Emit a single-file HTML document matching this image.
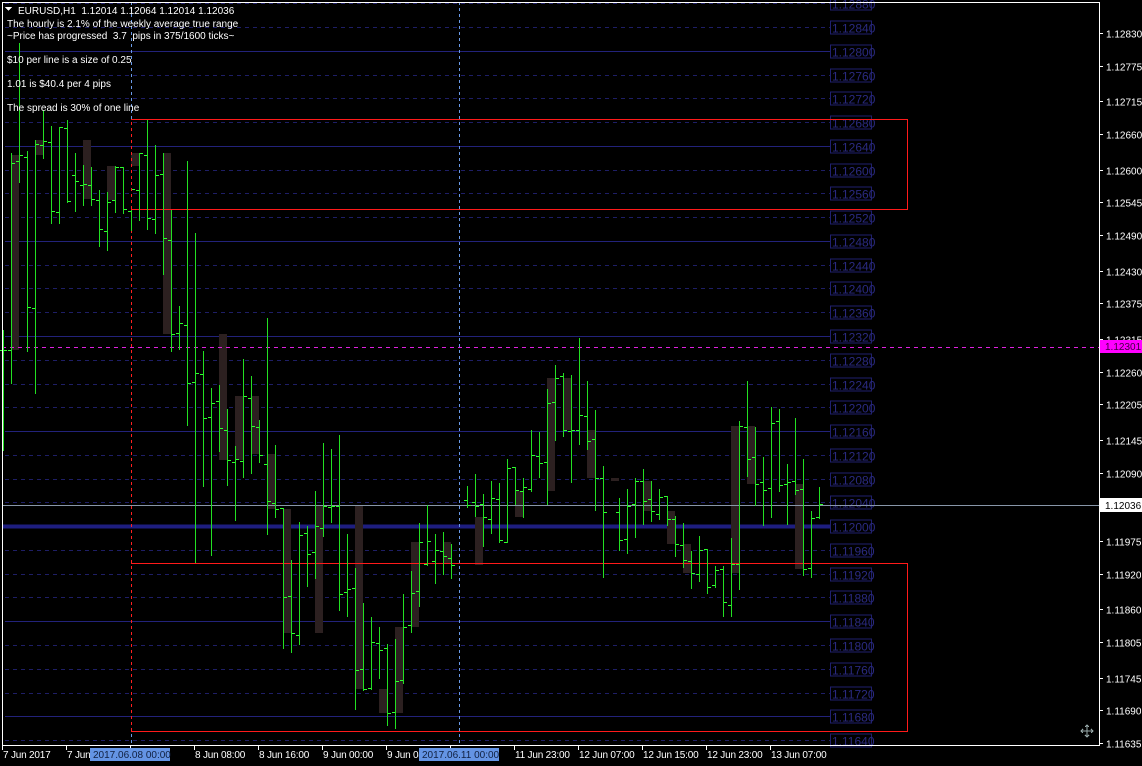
<!DOCTYPE html>
<html><head><meta charset="utf-8"><style>
html,body{margin:0;padding:0;background:#000;width:1142px;height:766px;overflow:hidden}
svg{display:block;font-family:"Liberation Sans",sans-serif}
text{white-space:pre}
</style></head><body>
<svg id="s" width="1142" height="766" xmlns="http://www.w3.org/2000/svg" shape-rendering="crispEdges">
<rect width="1142" height="766" fill="#000"/>
<g id="grid"></g>
<g id="rects" fill="#2c2020"></g>
<line x1="131.5" y1="2" x2="131.5" y2="745" stroke="#6a9ae8" stroke-dasharray="3,3"/>
<line x1="131.5" y1="119" x2="131.5" y2="731" stroke="#ff2020" stroke-dasharray="3,3" stroke-dashoffset="3"/>
<line x1="459.5" y1="2" x2="459.5" y2="745" stroke="#6a9ae8" stroke-dasharray="3,3"/>
<g stroke="#ff1a1a" fill="none">
<path d="M131 119.5H907.5V209.5H131"/>
<path d="M131 563.5H907.5V731.5H131"/>
</g>
<line x1="2" y1="347.5" x2="1099" y2="347.5" stroke="#e020e0" stroke-dasharray="4,4"/>
<line x1="2" y1="505.5" x2="1099" y2="505.5" stroke="#8896a8"/>
<g id="bars" stroke="#22e022"></g>
<g stroke="#fff" fill="none">
<line x1="2.5" y1="2" x2="2.5" y2="745"/>
<line x1="2" y1="2.5" x2="1099" y2="2.5"/>
<line x1="1099.5" y1="2" x2="1099.5" y2="746"/>
<line x1="2" y1="745.5" x2="1099" y2="745.5"/>
</g>
<g id="axis" fill="#fff" font-size="10"></g>
<rect x="1100" y="340" width="42" height="13" fill="#ff00ff"/>
<text x="1105" y="350" font-size="10" fill="#400040">1.12301</text>
<rect x="1100" y="498" width="42" height="14" fill="#fff"/>
<text x="1105" y="509" font-size="10" fill="#000">1.12036</text>
<g fill="#fff" font-size="10">
<path d="M5 7h7l-3.5 4z" fill="#fff"/>
<text x="18" y="14">EURUSD,H1  1.12014 1.12064 1.12014 1.12036</text>
<text x="7" y="27">The hourly is 2.1% of the weekly average true range</text>
<text x="7" y="39">~Price has progressed  3.7  pips in 375/1600 ticks~</text>
<text x="7" y="63">$10 per line is a size of 0.25</text>
<text x="7" y="87">1.01 is $40.4 per 4 pips</text>
<text x="7" y="111">The spread is 30% of one line</text>
</g>
<g id="time" fill="#fff" font-size="10" letter-spacing="-0.2"></g>
<rect x="90" y="748" width="80" height="13" fill="#6494e4"/>
<text x="93" y="758" font-size="10" fill="#102040">2017.06.08 00:00</text>
<rect x="419" y="748" width="80" height="13" fill="#6494e4"/>
<text x="422" y="758" font-size="10" fill="#102040">2017.06.11 00:00</text>
<g stroke="#9aa" fill="none" transform="translate(1087,731)">
<path d="M0-6V6M-6 0H6M-2-4L0-6L2-4M-2 4L0 6L2 4M-4-2L-6 0L-4 2M4-2L6 0L4 2"/>
</g>
</svg>
<script>
var NS="http://www.w3.org/2000/svg";
function el(p,t,a,txt){var e=document.createElementNS(NS,t);for(var k in a)e.setAttribute(k,a[k]);if(txt)e.textContent=txt;document.getElementById(p).appendChild(e);return e;}
function Y(p){return 27+(1.1284-p)/0.0004*23.77;}
for(var k=-1;k<=30;k++){
 var p=1.1284-k*0.0004,y=Math.round(27+23.77*k)+0.5;
 var solid=((k-1)%4==0);
 if(k==21){el("grid","rect",{x:2,y:y-2,width:828,height:4,fill:"#1e1e80"});}
 else el("grid","line",{x1:5,y1:y,x2:830,y2:y,stroke:solid?"#22227a":"#1e1e66","stroke-dasharray":solid?"":"4,4"});
 el("grid","rect",{x:830.5,y:y-6.5,width:41,height:13,fill:"none",stroke:"#20206e"});
 el("grid","text",{x:832,y:y+5,fill:"#2a2a80","font-size":"12","font-family":"Liberation Sans, sans-serif"},p.toFixed(5));
}
var ax=[1.12830,1.12775,1.12715,1.12660,1.12600,1.12545,1.12490,1.12430,1.12375,1.12315,1.12260,1.12205,1.12145,1.12090,1.11975,1.11920,1.11860,1.11805,1.11745,1.11690,1.11635];
ax.forEach(function(p){var y=Math.round(Y(p))+0.5;el("axis","line",{x1:1099,y1:y,x2:1103,y2:y,stroke:"#fff"});el("axis","text",{x:1106,y:y+4},p.toFixed(5));});
var tl=[[2,"7 Jun 2017"],[66,"7 Jun"],[130,""],[194,"8 Jun 08:00"],[258,"8 Jun 16:00"],[322,"9 Jun 00:00"],[386,"9 Jun 08"],[450,""],[514,"11 Jun 23:00"],[578,"12 Jun 07:00"],[642,"12 Jun 15:00"],[706,"12 Jun 23:00"],[770,"13 Jun 07:00"]];
tl.forEach(function(t){el("time","line",{x1:t[0]+0.5,y1:745,x2:t[0]+0.5,y2:750,stroke:"#fff"});if(t[1])el("time","text",{x:t[0]+1,y:758},t[1]);});
var R=[[11,155,350],[35,140,155],[83,140,199],[107,166,200],[131,153,166],[163,153,334],[219,334,460],[235,396,460],[251,396,454],[267,454,509],[283,509,633],[315,506,633],[355,506,689],[379,689,713],[395,627,713],[411,542,627],[443,542,564],[475,517,565],[515,491,517],[547,378,491],[563,378,430],[587,430,478],[611,478,481],[643,481,511],[667,511,544],[683,544,573],[731,426,573],[747,426,484],[795,484,569]];
R.forEach(function(r){el("rects","rect",{x:r[0],y:r[1],width:8,height:r[2]-r[1]});});
var B=[[3,330,450,350,350],[11,153,383,350,163],[19,43,182,161,155],[27,151,351,157,307],[35,140,393,308,144],[43,110,158,145,141],[51,126,223,142,211],[59,127,223,212,127],[67,120,202,128,201],[75,153,211,175,181],[83,165,205,185,184],[91,167,205,185,199],[99,190,246,200,229],[107,192,250,231,202],[115,166,212,200,167],[123,167,213,167,209],[131,210,230,211,189],[139,153,220,190,153],[147,120,229,155,218],[155,145,233,219,175],[163,153,274,174,238],[171,210,351,240,334],[179,306,349,333,323],[187,161,425,325,383],[195,233,562,382,373],[203,351,486,374,418],[211,388,555,417,403],[219,385,451,401,428],[227,409,485,430,460],[235,446,520,462,459],[243,359,477,461,396],[251,376,473,398,426],[259,420,462,427,455],[267,318,534,464,501],[275,445,517,503,509],[283,508,648,508,597],[291,560,652,596,633],[299,522,644,635,535],[307,526,586,533,554],[315,491,578,552,526],[323,443,536,528,506],[331,449,522,507,506],[339,435,610,506,594],[347,534,616,592,589],[355,568,709,588,670],[363,603,690,669,689],[371,617,689,688,642],[379,627,678,643,650],[387,644,725,648,713],[395,639,728,712,681],[403,594,683,680,627],[411,571,632,625,593],[419,523,606,591,542],[427,505,565,564,541],[435,534,583,561,550],[443,532,574,551,556],[451,544,578,558,565],[467,486,507,500,505],[475,474,516,502,506],[483,494,546,504,517],[491,481,533,519,498],[499,483,542,499,540],[507,459,542,542,468],[515,467,504,467,490],[523,478,517,491,487],[531,430,491,489,455],[539,432,477,456,463],[547,389,504,462,403],[555,365,440,402,378],[563,373,436,376,430],[571,375,482,431,430],[579,338,444,430,415],[587,381,449,416,441],[595,410,510,439,478],[603,466,577,478,512],[619,498,550,512,540],[627,489,553,539,506],[635,478,537,504,481],[643,469,524,481,501],[651,481,521,499,511],[659,489,519,514,497],[667,496,525,496,519],[675,516,556,519,544],[683,523,567,545,560],[691,551,588,561,573],[699,536,581,574,550],[707,549,593,549,587],[715,566,587,585,570],[723,566,616,569,602],[731,538,616,605,564],[739,421,589,564,426],[747,381,476,427,459],[755,427,505,457,484],[763,457,525,482,490],[771,407,517,488,423],[779,409,491,421,485],[787,464,524,484,482],[795,418,494,481,490],[803,459,575,489,569],[811,511,577,568,518],[819,487,518,517,504]];
B.forEach(function(b){var x=b[0]+0.5;
 el("bars","line",{x1:x,y1:b[1],x2:x,y2:b[2]+1});
 el("bars","line",{x1:b[0]-3,y1:b[3]+0.5,x2:b[0],y2:b[3]+0.5,stroke:"#30ff30"});
 el("bars","line",{x1:b[0]+1,y1:b[4]+0.5,x2:b[0]+4,y2:b[4]+0.5,stroke:"#30ff30"});
});
</script>
</body></html>
